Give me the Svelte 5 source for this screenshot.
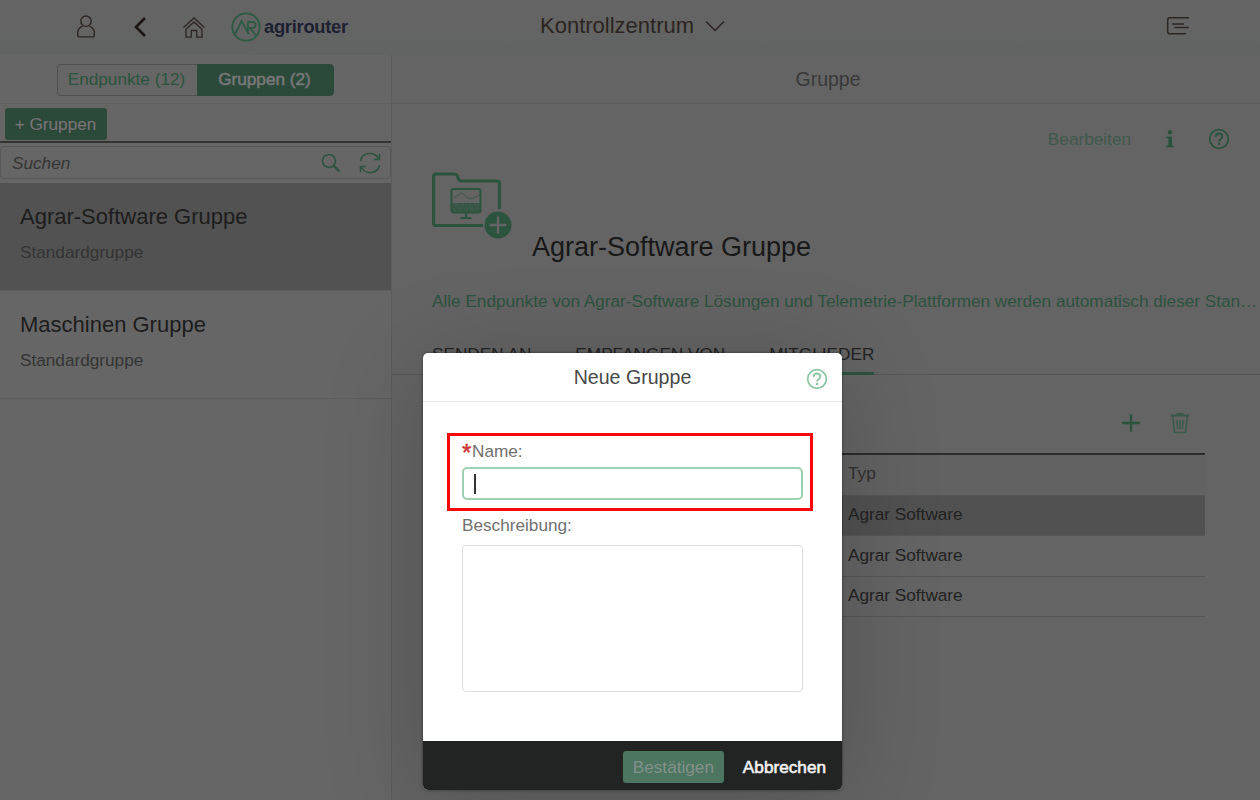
<script>
  const groups = [
    { name: 'Agrar-Software Gruppe', kind: 'Standardgruppe', selected: true },
    { name: 'Maschinen Gruppe', kind: 'Standardgruppe', selected: false }
  ];
  const tabs = ['SENDEN AN', 'EMPFANGEN VON', 'MITGLIEDER'];
  const members = ['Agrar Software', 'Agrar Software', 'Agrar Software'];
</script>

{#snippet help()}
  <svg class="help" width="22" height="22" viewBox="0 0 22 22" fill="none" stroke="currentColor">
    <circle cx="11" cy="11" r="9.3" stroke-width="1.7" />
    <path d="M7.800 8.800c0-4.500 6.600-4.300 6.500-.3 0 2.400-3.200 2.400-3.200 4.900" stroke-width="1.900" />
    <path d="M11.1 14.800v2.200" stroke-width="2.200" />
  </svg>
{/snippet}

<div class="page">
  <header class="shell">
    <nav>
      <svg width="20" height="26" viewBox="0 0 20 26" fill="none" stroke="#2d2623" stroke-width="1.4">
        <circle cx="10" cy="7.2" r="5.2" />
        <path d="M6.600 12.200C3.400 13.500 1.700 16 1.700 19.200v1.700q0 2 2 2h12.600q2 0 2-2v-1.700c0-3.200-1.700-5.700-4.900-7" />
      </svg>
      <svg width="14" height="22" viewBox="0 0 14 22" fill="none" stroke="#1d1714" stroke-width="2.6">
        <path d="M12 2 3 11l9 9" />
      </svg>
      <svg width="24" height="24" viewBox="0 0 24 24" fill="none" stroke="#2d2623" stroke-width="1.3">
        <path d="M1.500 12.500 12 3l10.500 9.500M4 14.300 12 7l8 7.300v7.900h-5.200V15.500H9.300v6.700H4z" />
      </svg>
      <div class="brand">
        <svg width="30" height="30" viewBox="0 0 30 30" fill="none" stroke="#2c5941" stroke-width="1.8">
          <circle cx="15" cy="15" r="13.700" />
          <path d="m4.500 21.500 6-12.500 7.300 13M17 19V10h4.300c4.500 0 4.500 6 0 6h-2.600l6 7" />
        </svg>
        <span>agrirouter</span>
      </div>
    </nav>
    <div class="apptitle">
      <span>Kontrollzentrum</span>
      <svg width="20" height="12" viewBox="0 0 20 12" fill="none" stroke="#2d2623" stroke-width="1.5"><path d="m1 1.500 9 9 9-9" /></svg>
    </div>
    <svg class="menu" width="24" height="20" viewBox="0 0 24 20" fill="none" stroke="#2d2623" stroke-width="1.500">
      <path d="M23 1.700H4Q1.700 1.700 1.700 4v11.500q0 2.300 2.300 2.300h16M6 8h12M8.500 11.500H23" />
    </svg>
  </header>

  <div class="split">
    <aside>
      <div class="segments">
        <div class="segbox"><span class="seg first">Endpunkte (12)</span><span class="seg on">Gruppen (2)</span></div>
      </div>
      <div class="addbar"><span class="addbtn">+ Gruppen</span></div>
      <div class="search">
        <em>Suchen</em>
        <svg width="20" height="20" viewBox="0 0 20 20" fill="none" stroke="#2c533f">
          <circle cx="8" cy="8" r="6.500" stroke-width="1.500" /><path d="m12.500 12.500 6 6" stroke-width="2.300" />
        </svg>
        <svg width="22" height="22" viewBox="0 0 22 22" fill="none" stroke="#2c533f" stroke-width="1.500">
          <path d="M1.500 9C3 .5 15-1.500 19.500 6.500M20.500 13c-1.500 8.500-13.500 10.500-18 2.500M20.500 2v5.500H15M1.500 20v-5.500H7" />
        </svg>
      </div>
      {#each groups as g}
        <div class="item" class:selected={g.selected}>
          <strong>{g.name}</strong>
          <span>{g.kind}</span>
        </div>
      {/each}
    </aside>

    <main>
      <div class="detailbar">Gruppe</div>
      <div class="actions">
        <span>Bearbeiten</span>
        <svg width="10" height="20" viewBox="0 0 10 20" fill="#2b523d">
          <circle cx="5" cy="3.300" r="2.200" /><path d="M1.300 7.500h5.700v9.100h2v1.700H1.100v-1.700h2.200V9.200h-2z" />
        </svg>
        {@render help()}
      </div>
      <div class="hero">
        <svg width="82" height="70" viewBox="0 0 82 70" fill="none" stroke="#2c533e">
          <path d="M51 56.500H4Q1.500 56.500 1.500 54V7.500Q1.500 5 4 5h18.500q2 0 3 2l1 3q1 2 3 2h35.500q2.500 0 2.500 2.500V40" stroke-width="3.200" />
          <rect x="19.500" y="20" width="29" height="23.500" rx="2" stroke-width="2" />
          <path d="M20 34h28v9H20z" fill="#2c533e" stroke="none" opacity=".75" />
          <path d="m22 29 7-5 9 6 10-4M24 43l5-9M31 43l2-9M37 43l-1-9M45 43l-5-9" stroke-width=".7" />
          <path d="M34 44v4.500M28.500 49h11" stroke-width="2" />
          <circle cx="66" cy="56" r="13.500" fill="#2c533e" stroke="none" />
          <path d="M66 47.500v17M57.500 56h17" stroke="#646464" stroke-width="2.300" />
        </svg>
        <h1>Agrar-Software Gruppe</h1>
      </div>
      <p class="desc">Alle Endpunkte von Agrar-Software Lösungen und Telemetrie-Plattformen werden automatisch dieser Stan…</p>
      <div class="tabs">
        {#each tabs as t, i}<span class:active={i === 2}>{t}</span>{/each}
      </div>
      <div class="tools">
        <svg width="20" height="20" viewBox="0 0 20 20" stroke="#2b523d" stroke-width="2.300"><path d="M10 1.200v17.600M1.200 10h17.600" /></svg>
        <svg width="20" height="22" viewBox="0 0 20 22" fill="none" stroke="#38594a" stroke-width="1.500">
          <path d="M1 3.500h18M6.500 2h7" stroke-width="2" /><path d="M2.700 4 4.500 20.500h11L17.300 4M7 8l.6 9M10 8v9M13 8l-.6 9" />
        </svg>
      </div>
      <div class="table">
        <div class="tr head"><span></span><span>Typ</span></div>
        {#each members as m, i}
          <div class="tr" class:selected={i === 0}><span></span><span>{m}</span></div>
        {/each}
      </div>
    </main>
  </div>

  <section class="dialog">
    <div class="dhead"><span></span><h2>Neue Gruppe</h2>{@render help()}</div>
    <div class="dbody">
      <div class="marked">
        <label for="name"><b>*</b>Name:</label>
        <div class="input" id="name"><i></i></div>
      </div>
      <div class="lbl">Beschreibung:</div>
      <div class="area"></div>
    </div>
    <div class="dfoot"><span class="ok">Bestätigen</span><span class="cancel">Abbrechen</span></div>
  </section>
</div>

<style>
  :global(body) { background: #646464; overflow: hidden; }
  * { box-sizing: border-box; }
  .page {
    position: relative; width: 1260px; height: 800px; overflow: hidden;
    display: flex; flex-direction: column;
    font: 17.2px/20px "Liberation Sans", Arial, sans-serif;
    color: #222; background: #646464; white-space: nowrap;
  }
  svg { display: block; flex: none; }
  .shell {
    height: 55px; flex: none; display: grid; grid-template-columns: 540px 1fr auto;
    align-items: start; background: linear-gradient(#646464, #626463);
  }
  nav { display: flex; align-items: center; height: 53px; padding-left: 76px; }
  nav svg:nth-child(2) { margin-left: 37px; }
  nav svg:nth-child(3) { margin-left: 35px; }
  .brand { display: flex; align-items: center; gap: 3px; margin-left: 25px; }
  .brand span { font: bold 18.3px/24px "Liberation Sans", Arial, sans-serif; color: #1c2031; letter-spacing: -.25px; }
  .apptitle { display: flex; align-items: center; gap: 11px; height: 51px; font-size: 22px; color: #2b2421; }
  .menu { margin: 16px 70px 0 0; }

  .split { flex: 1; display: flex; min-height: 0; }
  aside { width: 392px; flex: none; border-right: 1px solid #5c5c5c; background: #666; }
  .segments { height: 49px; border-bottom: 1px solid #606060; padding: 9px 0 0 57px; }
  .segbox { display: flex; width: 277px; height: 32px; line-height: 29px; text-align: center; }
  .seg { flex: 1; color: #2c533f; border: 1px solid #505050; border-radius: 4px 0 0 4px; padding-right: 2px; }
  .seg.first { flex: 0 0 140px; border-right: 0; }
  .seg.on { background: #2c4a3a; border-color: #2c4a3a; color: #777; border-radius: 0 4px 4px 0; -webkit-text-stroke: .6px #777; }
  .addbar { height: 39px; padding: 4px 0 0 5px; border-bottom: 2px solid #343434; }
  .addbtn {
    display: block; width: 102px; height: 32px; line-height: 32px; text-align: center; padding-right: 1px;
    background: #2c4a3a; color: #767676; border-radius: 3px; text-shadow: 0 0 1px #333; -webkit-text-stroke: .2px #767676;
  }
  .search {
    display: flex; align-items: center; height: 33px; margin: 3px 0 4px; padding: 0 9px 0 11px;
    border: 1px solid #565656; border-radius: 4px;
  }
  .search em { flex: 1; color: #353535; }
  .search svg + svg { margin-left: 18px; }
  .item { height: 108px; padding: 21px 20px 0; border-bottom: 1px solid #5d5d5d; }
  .item.selected { background: #525252; border-color: #5c5c5c; }
  .item strong { display: block; font-weight: 400; font-size: 22px; line-height: 26px; color: #1d1d1d; }
  .item span { display: block; margin-top: 12px; color: #343434; }

  main { flex: 1; min-width: 0; }
  .detailbar { height: 49px; line-height: 48px; text-align: center; padding-left: 4px; font-size: 19.500px; color: #393939; border-bottom: 1px solid #5b5b5b; }
  .actions { display: flex; justify-content: flex-end; align-items: center; height: 68px; padding: 2px 30px 0 0; color: #2b523d; }
  .actions span { color: #40594c; margin: -1px 34px 0 0; }
  .actions .help { margin-left: 33px; }
  .hero { display: flex; height: 100px; padding-left: 40px; margin-top: -3px; }
  .hero h1 { margin: 61px 0 0 18px; font-size: 27px; line-height: 34px; font-weight: 400; color: #181818; }
  .desc { margin: 22px 0 0 40px; color: #2d523f; letter-spacing: -.008px; }
  .tabs { display: flex; gap: 44px; height: 64px; padding: 33px 0 0 40px; border-bottom: 1px solid #555; color: #222; }
  .tabs .active { height: 31px; border-bottom: 3px solid #2c533f; }
  .tools { display: flex; justify-content: flex-end; align-items: center; gap: 29px; height: 78px; padding: 18px 70px 0 0; }
  .table { width: 773px; margin-left: 40px; border-top: 2px solid #2b2b2b; }
  .tr { display: grid; grid-template-columns: 416px 1fr; height: 40.500px; padding-bottom: 2px; align-items: center; border-bottom: 1px solid #555; color: #222; }
  .tr.head { color: #303030; background: #626262; padding-bottom: 4px; }
  .tr.selected { background: #515151; }

  .dialog {
    position: absolute; left: 423px; top: 353px; width: 419px; height: 437px;
    display: flex; flex-direction: column; background: #fff; border-radius: 5px; overflow: hidden;
    box-shadow: 0 0 3px rgba(0,0,0,.5), 0 12px 100px rgba(0,0,0,.18);
  }
  .dhead { display: grid; grid-template-columns: 22px 1fr 22px; height: 49px; padding: 0 14px; border-bottom: 1px solid #e6e6e6; color: #8ac6a2; }
  .dhead h2 { margin: 0; text-align: center; font-size: 19.600px; line-height: 48px; font-weight: 400; color: #484848; }
  .dhead .help { margin-top: 15px; }
  .dbody { flex: 1; padding: 31px 29px 0 24px; color: #707070; }
  .marked { height: 78px; padding: 6px 7px 0 12px; border: 3px solid #f70808; }
  .marked label { display: flex; height: 25px; line-height: 18px; }
  .marked b { width: 10px; color: #cb3535; font-size: 24px; line-height: 22px; font-weight: 400; -webkit-text-stroke: .5px #cb3535; }
  .input { height: 33px; border: 2px solid #9ed0b2; border-radius: 5px; padding: 5px 0 0 10px; }
  .input i { display: block; width: 1.500px; height: 20px; background: #333; }
  .lbl { margin: 4px 0 10px 15px; }
  .area { width: 341px; height: 147px; margin-left: 15px; border: 1.500px solid #dedede; border-radius: 4px; }
  .dfoot { display: flex; height: 49px; padding: 10px 16px 0 0; justify-content: flex-end; gap: 19px; background: #222423; line-height: 32px; }
  .ok { width: 101px; height: 32px; text-align: center; border-radius: 3px; background: #4c7660; color: #84918a; }
  .cancel { color: #f1f1f1; -webkit-text-stroke: .6px #f1f1f1; }
</style>
